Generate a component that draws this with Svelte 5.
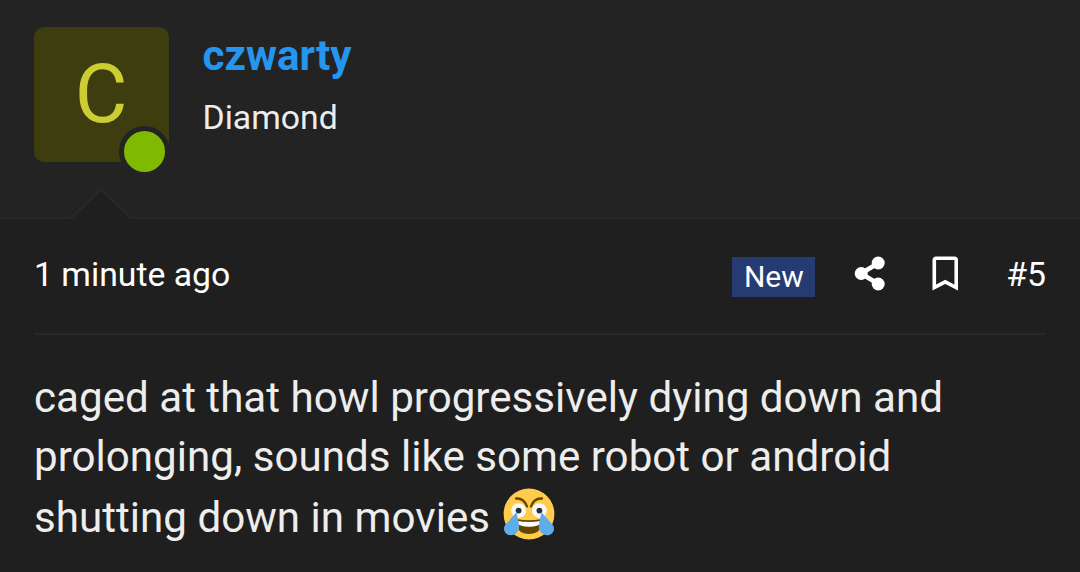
<script>
    const post = {
        author: 'czwarty',
        rank: 'Diamond',
        date: '1 minute ago',
        number: '#5',
        online: true,
        isNew: true,
    };
</script>

<article class="post">
    <header class="user">
        <div class="avatar">
            <span class="letter">C</span>
            {#if post.online}
                <span class="online"></span>
            {/if}
        </div>
        <div class="details">
            <h4>{post.author}</h4>
            <h5>{post.rank}</h5>
        </div>
        <svg class="arrow" width="64" height="32" viewBox="0 0 64 32">
            <path d="M1 32 L32 2 L63 32 Z" fill="#1f1f1f" />
            <path d="M1 32 L32 2 L63 32" fill="none" stroke="#282828" stroke-width="2.5" />
        </svg>
    </header>

    <section class="main">
        <div class="attribution">
            <time>{post.date}</time>
            <div class="actions">
                {#if post.isNew}
                    <span class="new">New</span>
                {/if}
                <svg class="share" width="32" height="36" viewBox="0 0 32 36">
                    <path d="M24.5 7 L7 17.5 L24.5 28" fill="none" stroke="#fff" stroke-width="4.6" />
                    <circle cx="24.2" cy="7" r="6.5" fill="#fff" />
                    <circle cx="7.2" cy="17.5" r="6.5" fill="#fff" />
                    <circle cx="24.2" cy="28" r="6.5" fill="#fff" />
                </svg>
                <svg class="bookmark" width="28" height="36" viewBox="0 0 28 36">
                    <path d="M2.3 31.6 V4.2 Q2.3 2.3 4.2 2.3 H22.3 Q24.2 2.3 24.2 4.2 V31.6 L13.2 25.8 Z" fill="none" stroke="#fff" stroke-width="3.6" />
                </svg>
                <span class="number">{post.number}</span>
            </div>
        </div>

        <div class="message">
            caged at that howl progressively dying down and<br />
            prolonging, sounds like some robot or android<br />
            shutting down in movies
            <svg class="smilie" width="52" height="52" viewBox="0 0 52 52">
                <circle cx="26" cy="26" r="25.4" fill="#ffcc4d" />
                <circle cx="15.6" cy="22.6" r="7.4" fill="#f5f8fa" />
                <circle cx="36.4" cy="22.6" r="7.4" fill="#f5f8fa" />
                <circle cx="15.6" cy="22.6" r="2.9" fill="#292f33" />
                <circle cx="36.4" cy="22.6" r="2.9" fill="#292f33" />
                <g fill="none" stroke="#664500" stroke-width="2.4" stroke-linecap="round">
                    <path d="M13 10.5 C18 10 22 13 24 18.4" />
                    <path d="M39 10.5 C34 10 30 13 28 18.4" />
                </g>
                <path d="M14.5 31.3 Q26 33 37.5 31.3 V39 Q36 46 26 46 Q16 46 14.5 39 Z" fill="#664500" />
                <path d="M14.5 32.9 Q26 35.2 37.5 32.9 V35 Q35.5 38.8 26 38.8 Q16.5 38.8 14.5 35 Z" fill="#fff" />
                <path d="M13.5 24 L16 36.5 C17 42 13.5 47.2 8 47.2 C2.5 47.2 -.3 42 1.6 38 C3 35 7 32.5 13.5 24 Z" fill="#5dadec" />
                <path d="M38.5 24 L36 36.5 C35 42 38.5 47.2 44 47.2 C49.5 47.2 52.3 42 50.4 38 C49 35 45 32.5 38.5 24 Z" fill="#5dadec" />
            </svg>
        </div>
    </section>
</article>

<style>
    :global(body) {
        margin: 0;
        background: #1f1f1f;
    }
    .post {
        height: 572px;
        overflow: hidden;
        background: #1f1f1f;
        color: #ededed;
        font-family: Roboto, sans-serif;
    }
    .user {
        position: relative;
        display: flex;
        gap: 33.5px;
        box-sizing: border-box;
        height: 219px;
        padding: 27px 34px;
        background: #232323;
        border-bottom: 2px solid #282828;
    }
    .avatar {
        position: relative;
        display: flex;
        align-items: center;
        justify-content: center;
        width: 135px;
        height: 135px;
        border-radius: 10px;
        background: #3d3d10;
    }
    .letter {
        margin-right: 1px;
        color: #cccc33;
        font-size: 81px;
        line-height: 1;
    }
    .online {
        position: absolute;
        right: -0.5px;
        bottom: -14.5px;
        width: 41px;
        height: 41px;
        border: 5px solid #232323;
        border-radius: 50%;
        background: #7fb900;
    }
    h4,
    h5 {
        margin: 0;
        font-weight: 400;
    }
    h4 {
        margin-top: 1px;
        color: #2596f0;
        font-size: 42.2px;
        font-weight: 700;
        line-height: 56px;
    }
    h5 {
        margin-top: 11px;
        font-size: 33.75px;
        line-height: 46px;
    }
    .arrow {
        position: absolute;
        left: 68.5px;
        bottom: -2px;
    }
    .main {
        padding: 0 34px;
    }
    .attribution {
        display: flex;
        justify-content: space-between;
        align-items: center;
        box-sizing: border-box;
        height: 116px;
        padding-bottom: 2px;
        border-bottom: 2px solid #282828;
        color: #fefefe;
        font-size: 33.75px;
    }
    time,
    .number {
        line-height: 40px;
    }
    .actions {
        display: flex;
        align-items: center;
    }
    .new {
        margin-top: 3px;
        padding: 0 11.5px;
        background: #263b72;
        font-size: 30px;
        line-height: 40px;
    }
    .share {
        margin: 0 0 2px 39px;
    }
    .bookmark {
        margin: 0 0 2px 46px;
    }
    .number {
        margin-left: 46px;
    }
    .message {
        padding-top: 33px;
        font-size: 42.15px;
        line-height: 59.06px;
        white-space: nowrap;
    }
    .smilie {
        margin: 2px 0 0 3px;
        vertical-align: -8px;
    }
</style>
